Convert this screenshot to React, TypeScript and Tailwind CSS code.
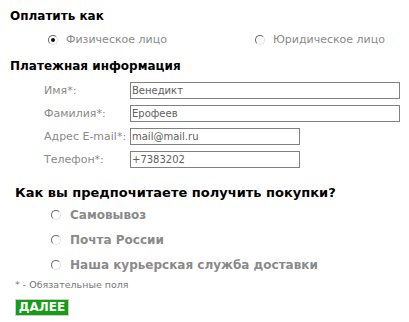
import React from "react"

function Radio({ checked = false }: { checked?: boolean }) {
  return (
    <span className="relative inline-flex h-[10px] w-[10px] shrink-0 items-center justify-center rounded-full border border-t-[#666] border-l-[#666] border-b-[#e2e2e2] border-r-[#e2e2e2] bg-white">
      {checked && <span className="h-[4px] w-[4px] rounded-full bg-[#111]" />}
    </span>
  )
}

const fields = [
  { label: "Имя*:", value: "Венедикт", w: "w-[270px]" },
  { label: "Фамилия*:", value: "Ерофеев", w: "w-[270px]" },
  { label: "Адрес E-mail*:", value: "mail@mail.ru", w: "w-[170px]" },
  { label: "Телефон*:", value: "+7383202", w: "w-[170px]" },
]

const delivery = ["Самовывоз", "Почта России", "Наша курьерская служба доставки"]

export default function App() {
  return (
    <div className="h-[322px] w-[409px] overflow-hidden bg-white font-['DejaVu_Sans',sans-serif] text-black">
      <div className="px-[10px] pt-[8px] text-[12px] font-bold leading-[16px]">Оплатить как</div>

      <div className="mt-[9px] flex items-center whitespace-nowrap text-[11px] leading-[14px] text-[#8a8a8a]">
        <div className="ml-[48px] flex items-center gap-[8px]">
          <Radio checked />
          <span>Физическое лицо</span>
        </div>
        <div className="ml-auto mr-[24px] flex items-center gap-[8px]">
          <Radio />
          <span>Юридическое лицо</span>
        </div>
      </div>

      <div className="mt-[11px] px-[10px] text-[12px] font-bold leading-[16px]">Платежная информация</div>

      <div className="mt-[8px] flex flex-col gap-[6px] pl-[44px]">
        {fields.map((f) => (
          <div key={f.label} className="flex items-center">
            <span className="w-[86px] whitespace-nowrap text-[11px] leading-[14px] text-[#8a8a8a]">{f.label}</span>
            <div className={`h-[17px] ${f.w} border border-[#808080] bg-white px-[1px] text-[10px] leading-[15px] text-[#606060]`}>
              {f.value}
            </div>
          </div>
        ))}
      </div>

      <div className="mt-[17px] px-[15px] text-[13px] font-bold leading-[16px]">
        Как вы предпочитаете получить покупки?
      </div>

      <div className="mt-[7px] flex flex-col gap-[11px] pl-[51px]">
        {delivery.map((d) => (
          <div key={d} className="flex items-center gap-[9px] whitespace-nowrap text-[12px] font-bold leading-[14px] text-[#8a8a8a]">
            <Radio />
            <span>{d}</span>
          </div>
        ))}
      </div>

      <div className="mt-[7px] px-[15px] text-[9.5px] leading-[12px] text-[#777]">* - Обязательные поля</div>

      <button className="ml-[15px] mt-[8px] block h-[17px] w-[54px] border border-[#ccc] bg-[#169c16] text-[12px] font-bold leading-[15px] text-white">
        ДАЛЕЕ
      </button>
    </div>
  )
}
